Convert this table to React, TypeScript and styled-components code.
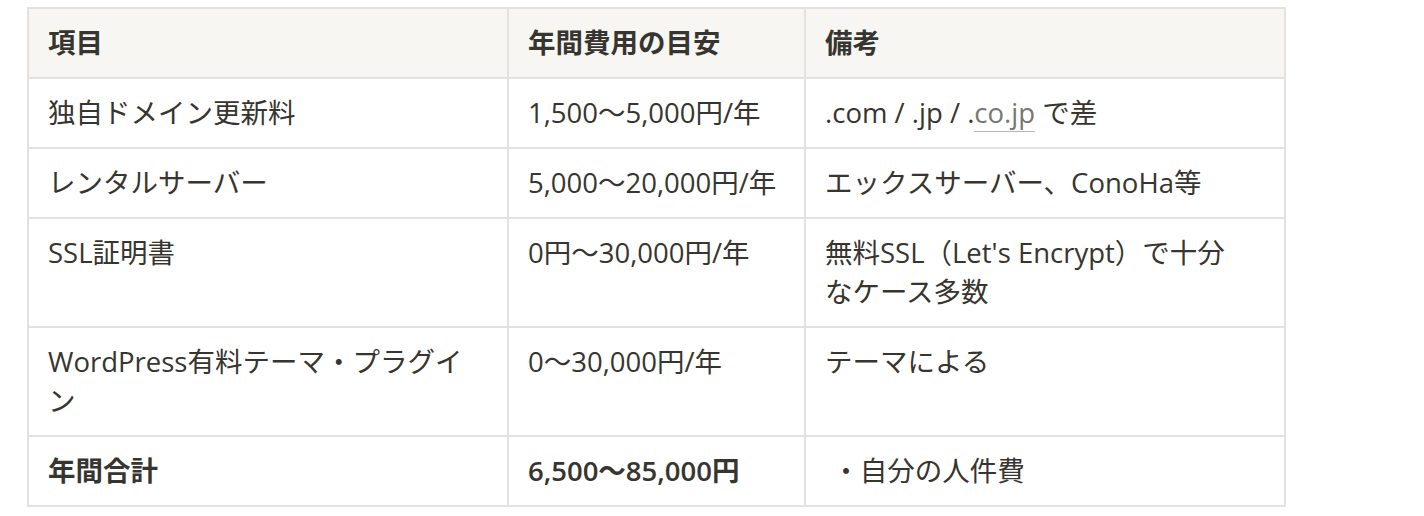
import React from 'react';
import styled, { createGlobalStyle } from 'styled-components';

const GlobalStyle = createGlobalStyle`
  html, body {
    margin: 0;
    padding: 0;
    background: #ffffff;
  }
  body {
    font-family: "Open Sans", "Noto Sans CJK JP", sans-serif;
    color: #37352f;
    -webkit-font-smoothing: antialiased;
  }
`;

const Page = styled.div`
  padding: 7px 0 0 27px;
`;

const Table = styled.table`
  border-collapse: collapse;
  table-layout: fixed;
  width: 1257px;
  font-size: 27.5px;
  line-height: 39px;
`;

const HeaderCell = styled.th`
  background: #f7f6f3;
  border: 2px solid #e3e2e0;
  text-align: left;
  font-weight: 600;
  padding: 14px 24px 15px 19px;
  vertical-align: top;
`;

const Cell = styled.td<{ $bold?: boolean }>`
  border: 2px solid #e3e2e0;
  padding: 14px 24px 15px 19px;
  vertical-align: top;
  font-weight: ${p => (p.$bold ? 600 : 400)};
  word-break: break-all;
`;

// notes column wraps a little earlier than the others
const NoteCell = styled(Cell)`
  padding-right: 36px;
`;

const Link = styled.span`
  color: #787774;
  border-bottom: 1px solid #b8b6b2;
`;

const rows: { item: React.ReactNode; cost: string; note: React.ReactNode }[] = [
  {
    item: '独自ドメイン更新料',
    cost: '1,500〜5,000円/年',
    note: (
      <>
        .com / .jp / .<Link>co.jp</Link> で差
      </>
    ),
  },
  { item: 'レンタルサーバー', cost: '5,000〜20,000円/年', note: 'エックスサーバー、ConoHa等' },
  { item: 'SSL証明書', cost: '0円〜30,000円/年', note: '無料SSL（Let\'s Encrypt）で十分なケース多数' },
  { item: 'WordPress有料テーマ・プラグイン', cost: '0〜30,000円/年', note: 'テーマによる' },
];

const App: React.FC = () => (
  <Page>
    <GlobalStyle />
    <Table>
      <colgroup>
        <col style={{ width: 480 }} />
        <col style={{ width: 297 }} />
        <col style={{ width: 480 }} />
      </colgroup>
      <thead>
        <tr>
          <HeaderCell>項目</HeaderCell>
          <HeaderCell>年間費用の目安</HeaderCell>
          <HeaderCell>備考</HeaderCell>
        </tr>
      </thead>
      <tbody>
        {rows.map((r, i) => (
          <tr key={i}>
            <Cell>{r.item}</Cell>
            <Cell>{r.cost}</Cell>
            <NoteCell>{r.note}</NoteCell>
          </tr>
        ))}
        <tr>
          <Cell $bold>年間合計</Cell>
          <Cell $bold>6,500〜85,000円</Cell>
          <NoteCell>&nbsp;・自分の人件費</NoteCell>
        </tr>
      </tbody>
    </Table>
  </Page>
);

export default App;
